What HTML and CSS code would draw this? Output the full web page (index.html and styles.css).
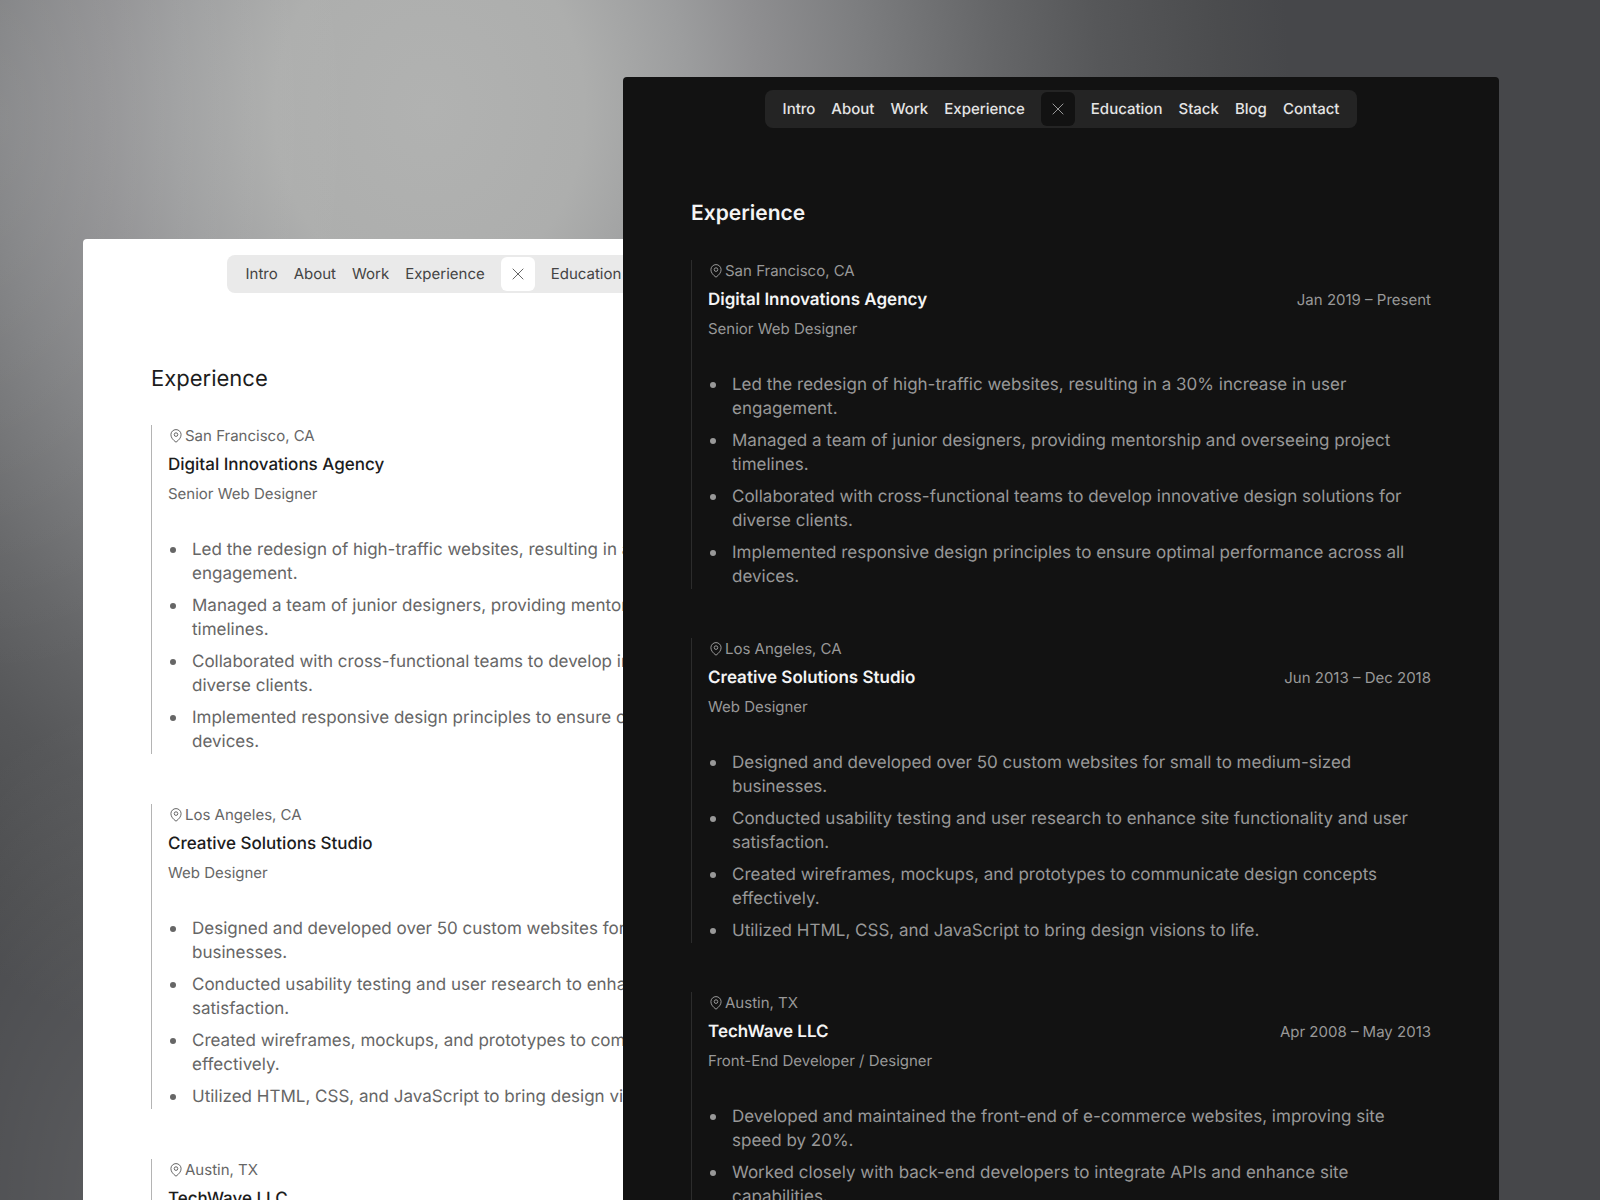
FILE: index.html
```html
<!DOCTYPE html>
<html lang="en">
<head>
<meta charset="utf-8">
<title>Experience</title>
<link rel="stylesheet" href="styles.css">
</head>
<body>
<template id="page-content">
  <nav class="nav" aria-label="Sections">
    <a href="#intro">Intro</a>
    <a href="#about">About</a>
    <a href="#work">Work</a>
    <a href="#experience">Experience</a>
    <button class="nav-close" type="button" aria-label="Close menu">
      <svg width="12" height="12" viewBox="0 0 12 12" fill="none" stroke="currentColor" aria-hidden="true"><path d="M.7.7l10.6 10.6M11.3.7L.7 11.3"/></svg>
    </button>
    <a href="#education">Education</a>
    <a href="#stack">Stack</a>
    <a href="#blog">Blog</a>
    <a href="#contact">Contact</a>
  </nav>
  <section class="experience">
    <h2>Experience</h2>
    <div class="jobs"></div>
  </section>
</template>
<template id="job-content">
  <article class="job">
    <p class="place">
      <svg class="pin" width="16" height="16" viewBox="0 0 16 16" fill="none" stroke="currentColor" aria-hidden="true"><path d="M8 14.200C5.200 12.200 2.900 9.600 2.900 6.700a5.100 5.100 0 0 1 10.200 0c0 2.900-2.300 5.500-5.100 7.500z"/><circle cx="8" cy="6.600" r="1.800"/></svg>
      <span class="city"></span>
    </p>
    <div class="job-head"><h3></h3><time></time></div>
    <p class="role"></p>
    <ul class="duties"></ul>
  </article>
</template>
<main class="stage">
  <div class="sheet light"></div>
  <div class="sheet dark"></div>
</main>
<script src="script.js"></script>
</body>
</html>
```
FILE: styles.css
```css
* { box-sizing: border-box; }

body {
  margin: 0;
  font-family: Inter, "Liberation Sans", sans-serif;
  text-rendering: geometricPrecision;
  background: #46474a;
}

h2, h3, p, ul { margin: 0; padding: 0; }

.stage {
  position: relative;
  height: 100vh;
  overflow: hidden;
  background:
    radial-gradient(360px 560px at 0 120px, rgba(255, 255, 255, .1), transparent),
    radial-gradient(300px 500px at 140px 100%, rgba(255, 255, 255, .12), transparent),
    radial-gradient(860px 1000px at 430px 110px, #b1b2b1 0%, #adaead 18%, #9c9d9e 30%, #8f8f91 38%, #7c7d7f 51%, #656668 66%, #565759 78%, #4b4c4e 92%, #46474a 100%);
}

/* Two overlapping windows on the backdrop */
.sheet {
  position: absolute;
  width: 876px;
  padding: 0 68px;
  border-radius: 4px;
  color: var(--text);
  background: var(--surface);
}

.light {
  --surface: #fff;
  --text: #666;
  --strong: #1c1c1c;
  --link: #444;
  --bar: #eaeaea;
  --rule: #b4b4b4;
  --job-gap: 50px;
  left: 83px;
  top: 239px;
  padding-top: 16px;
}

.dark {
  --surface: #121212;
  --text: #989898;
  --strong: #f4f4f4;
  --link: #e4e4e4;
  --bar: #242424;
  --rule: #2c2c2c;
  --job-gap: 49px;
  left: 623px;
  top: 77px;
  padding-top: 13px;
}

.nav {
  display: flex;
  align-items: center;
  gap: 16px;
  width: max-content;
  height: 38px;
  margin: 0 auto;
  padding: 0 18px;
  border-radius: 8px;
  background: var(--bar);
}

.nav a {
  color: var(--link);
  font-size: 15px;
  line-height: 20px;
  text-decoration: none;
}

.nav-close {
  display: grid;
  place-items: center;
  width: 34px;
  height: 34px;
  padding: 0;
  border: 0;
  border-radius: 6px;
  color: var(--text);
  background: var(--surface);
}

.experience { padding-top: 72px; }

h2 {
  margin-bottom: 32px;
  color: var(--strong);
  font-size: 21px;
  font-weight: 400;
  line-height: 28px;
}

.jobs {
  display: grid;
  gap: var(--job-gap);
}

.job {
  padding-left: 16px;
  border-left: 1px solid var(--rule);
}

.place {
  display: flex;
  align-items: center;
  gap: 1px;
  font-size: 15px;
  line-height: 22px;
}

.job-head {
  display: flex;
  justify-content: space-between;
  margin: 6px 0;
  line-height: 24px;
}

h3 {
  color: var(--strong);
  font-size: 17px;
  font-weight: 500;
}

time { font-size: 15px; }

.role {
  font-size: 15px;
  line-height: 22px;
}

.duties {
  display: grid;
  gap: 8px;
  margin-top: 33px;
  font-size: 17px;
  line-height: 24px;
  list-style: none;
}

.duties li {
  display: grid;
  grid-template-columns: 22px 1fr;
  column-gap: 2px;
}

.duties li::before {
  content: "";
  width: 6px;
  height: 6px;
  margin: 9px 2px;
  border-radius: 50%;
  background: currentColor;
}

.light h2 { font-size: 22px; }
.dark .nav a { font-weight: 500; }
.dark h2, .dark h3 { font-weight: 600; }
```
FILE: script.js
```js
const jobs = [
  {
    city: 'San Francisco, CA',
    company: 'Digital Innovations Agency',
    dates: 'Jan 2019 – Present',
    role: 'Senior Web Designer',
    duties: [
      'Led the redesign of high-traffic websites, resulting in a 30% increase in user engagement.',
      'Managed a team of junior designers, providing mentorship and overseeing project timelines.',
      'Collaborated with cross-functional teams to develop innovative design solutions for diverse clients.',
      'Implemented responsive design principles to ensure optimal performance across all devices.'
    ]
  },
  {
    city: 'Los Angeles, CA',
    company: 'Creative Solutions Studio',
    dates: 'Jun 2013 – Dec 2018',
    role: 'Web Designer',
    duties: [
      'Designed and developed over 50 custom websites for small to medium-sized businesses.',
      'Conducted usability testing and user research to enhance site functionality and user satisfaction.',
      'Created wireframes, mockups, and prototypes to communicate design concepts effectively.',
      'Utilized HTML, CSS, and JavaScript to bring design visions to life.'
    ]
  },
  {
    city: 'Austin, TX',
    company: 'TechWave LLC',
    dates: 'Apr 2008 – May 2013',
    role: 'Front-End Developer / Designer',
    duties: [
      'Developed and maintained the front-end of e-commerce websites, improving site speed by 20%.',
      'Worked closely with back-end developers to integrate APIs and enhance site capabilities.'
    ]
  }
];

const pageTemplate = document.getElementById('page-content');
const jobTemplate = document.getElementById('job-content');

for (const sheet of document.querySelectorAll('.sheet')) {
  const page = pageTemplate.content.cloneNode(true);
  const list = page.querySelector('.jobs');
  for (const job of jobs) {
    const item = jobTemplate.content.cloneNode(true);
    item.querySelector('.city').textContent = job.city;
    item.querySelector('h3').textContent = job.company;
    item.querySelector('time').textContent = job.dates;
    item.querySelector('.role').textContent = job.role;
    for (const duty of job.duties) {
      const li = document.createElement('li');
      li.textContent = duty;
      item.querySelector('.duties').append(li);
    }
    list.append(item);
  }
  sheet.append(page);
}
```
